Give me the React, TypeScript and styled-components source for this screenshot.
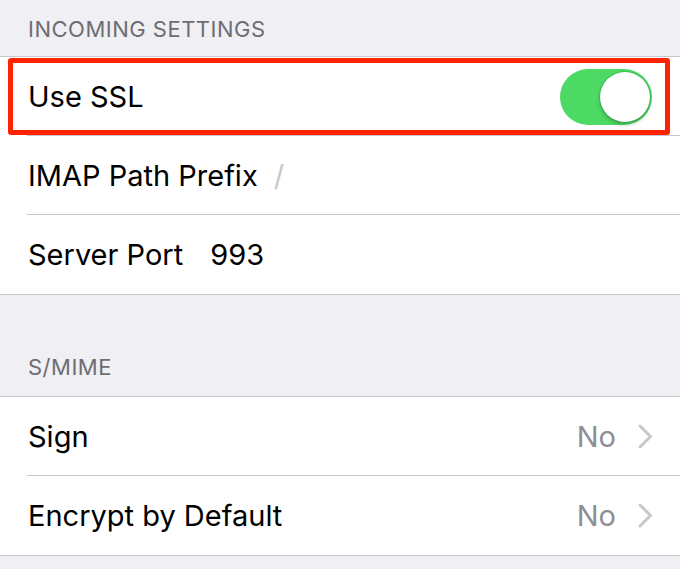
import React from "react";
import styled, { createGlobalStyle } from "styled-components";

const Global = createGlobalStyle`
  html, body { margin: 0; padding: 0; background: #efeff4; }
  body { font-family: Inter, "Liberation Sans", Arial, sans-serif; -webkit-font-smoothing: antialiased; }
`;

const Page = styled.div`
  width: 680px;
  height: 569px;
  background: #efeff4;
  overflow: hidden;
  display: flex;
  flex-direction: column;
`;

const SectionHeader = styled.div<{ $height: number; $pad: number }>`
  height: ${(p) => p.$height}px;
  box-sizing: border-box;
  padding: 0 28px ${(p) => p.$pad}px 28px;
  display: flex;
  align-items: flex-end;
  font-size: 22px;
  letter-spacing: 0.5px;
  color: #6d6d72;
  line-height: 1;
`;

const Group = styled.div`
  background: #fff;
  border-top: 1px solid #c8c7cc;
  border-bottom: 1px solid #c8c7cc;
  display: flex;
  flex-direction: column;
`;

const Row = styled.div<{ $last?: boolean }>`
  position: relative;
  height: 79px;
  box-sizing: border-box;
  padding: 0 27px 0 28px;
  display: flex;
  align-items: center;
  font-size: 29px;
  color: #000;
  &::after {
    content: "";
    display: ${(p) => (p.$last ? "none" : "block")};
    position: absolute;
    left: 27px;
    right: 0;
    bottom: 0;
    height: 1px;
    background: #c8c7cc;
  }
`;

const Label = styled.span`
  flex: 0 0 auto;
`;

const FieldValue = styled.span<{ $gap: number; $muted?: boolean }>`
  margin-left: ${(p) => p.$gap}px;
  color: ${(p) => (p.$muted ? "#c7c7cc" : "#000")};
`;

const Spacer = styled.span`
  flex: 1 1 auto;
`;

const Detail = styled.span`
  color: #8e8e93;
  margin-right: 22px;
`;

const Track = styled.div`
  position: relative;
  width: 92px;
  height: 56px;
  border-radius: 28px;
  background: #4cd964;
  margin-right: 1px;
`;

const Knob = styled.div`
  position: absolute;
  top: 3px;
  right: 2px;
  width: 50px;
  height: 50px;
  border-radius: 50%;
  background: #fff;
  box-shadow: 0 3px 4px rgba(0, 0, 0, 0.2), 0 0 0 1px rgba(40, 150, 60, 0.35);
`;

const Highlight = styled.div`
  position: absolute;
  left: 8px;
  right: 10px;
  top: 1px;
  bottom: 1px;
  border: 5px solid #ff2200;
  border-radius: 3px;
  pointer-events: none;
`;

const Chevron = () => (
  <svg width="15" height="25" viewBox="0 0 15 25" fill="none">
    <path d="M2 2 L12.5 12.5 L2 23" stroke="#c7c7cc" strokeWidth="3" strokeLinecap="round" strokeLinejoin="round" />
  </svg>
);

export default function App() {
  return (
    <Page>
      <Global />
      <SectionHeader $height={56} $pad={16}>INCOMING SETTINGS</SectionHeader>
      <Group>
        <Row>
          <Label>Use SSL</Label>
          <Spacer />
          <Track>
            <Knob />
          </Track>
          <Highlight />
        </Row>
        <Row>
          <Label>IMAP Path Prefix</Label>
          <FieldValue $gap={16} $muted>/</FieldValue>
        </Row>
        <Row $last>
          <Label>Server Port</Label>
          <FieldValue $gap={27}>993</FieldValue>
        </Row>
      </Group>
      <SectionHeader $height={101} $pad={18}>S/MIME</SectionHeader>
      <Group>
        <Row>
          <Label>Sign</Label>
          <Spacer />
          <Detail>No</Detail>
          <Chevron />
        </Row>
        <Row $last>
          <Label>Encrypt by Default</Label>
          <Spacer />
          <Detail>No</Detail>
          <Chevron />
        </Row>
      </Group>
    </Page>
  );
}
